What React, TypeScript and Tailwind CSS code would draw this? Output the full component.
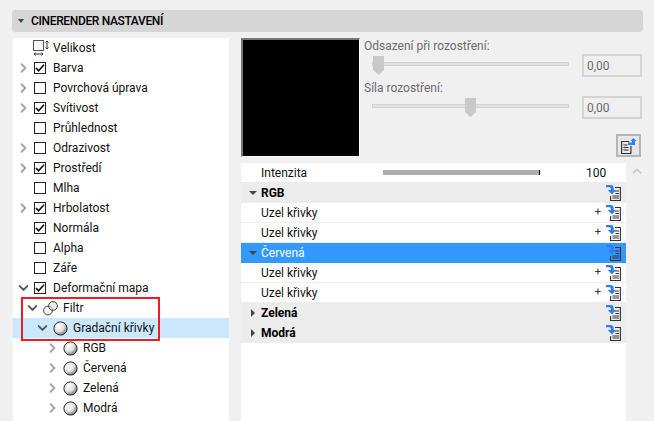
import { ChevronDown, ChevronRight } from 'lucide-react';

type Node = {
  label: string;
  arrow?: 'right' | 'down';
  check?: boolean;
  icon?: 'size' | 'filter' | 'ball';
  indent?: number;
  selected?: boolean;
};

const tree: Node[] = [
  { label: 'Velikost', icon: 'size' },
  { label: 'Barva', arrow: 'right', check: true },
  { label: 'Povrchová úprava', arrow: 'right', check: false },
  { label: 'Svítivost', arrow: 'right', check: true },
  { label: 'Průhlednost', check: false },
  { label: 'Odrazivost', arrow: 'right', check: false },
  { label: 'Prostředí', arrow: 'right', check: true },
  { label: 'Mlha', check: false },
  { label: 'Hrbolatost', arrow: 'right', check: true },
  { label: 'Normála', check: true },
  { label: 'Alpha', check: false },
  { label: 'Záře', check: false },
  { label: 'Deformační mapa', arrow: 'down', check: true },
  { label: 'Filtr', arrow: 'down', icon: 'filter', indent: 9 },
  { label: 'Gradační křivky', arrow: 'down', icon: 'ball', indent: 19, selected: true },
  { label: 'RGB', arrow: 'right', icon: 'ball', indent: 29 },
  { label: 'Červená', arrow: 'right', icon: 'ball', indent: 29 },
  { label: 'Zelená', arrow: 'right', icon: 'ball', indent: 29 },
  { label: 'Modrá', arrow: 'right', icon: 'ball', indent: 29 },
];

type Row = { label: string; kind: 'group' | 'item' | 'active'; open?: boolean };

const rows: Row[] = [
  { label: 'RGB', kind: 'group', open: true },
  { label: 'Uzel křivky', kind: 'item' },
  { label: 'Uzel křivky', kind: 'item' },
  { label: 'Červená', kind: 'active', open: true },
  { label: 'Uzel křivky', kind: 'item' },
  { label: 'Uzel křivky', kind: 'item' },
  { label: 'Zelená', kind: 'group' },
  { label: 'Modrá', kind: 'group' },
];

function SizeIcon() {
  return (
    <svg width="16" height="16" viewBox="0 0 16 16" fill="none" className="shrink-0">
      <rect x="0.5" y="0.5" width="10" height="10" stroke="#555" />
      <path d="M14 1v8M12.5 2.5 14 1l1.5 1.5M12.5 7.5 14 9l1.5-1.5" stroke="#333" />
      <path d="M1 14h9M2.5 12.5 1 14l1.5 1.5M8.5 12.5 10 14l-1.5 1.5" stroke="#333" />
    </svg>
  );
}

function Ball() {
  return (
    <svg width="15" height="15" viewBox="0 0 15 15" className="shrink-0">
      <defs>
        <radialGradient id="ball" cx="0.36" cy="0.32" r="0.78">
          <stop offset="0" stopColor="#ffffff" />
          <stop offset="0.5" stopColor="#e2e2e2" />
          <stop offset="1" stopColor="#5f5f5f" />
        </radialGradient>
      </defs>
      <circle cx="7.5" cy="7.5" r="6.6" fill="url(#ball)" stroke="#2b2b2b" strokeWidth="1" />
    </svg>
  );
}

function FilterIcon() {
  return (
    <svg width="15" height="15" viewBox="0 0 15 15" fill="none" stroke="#444" className="shrink-0">
      <circle cx="5" cy="9.5" r="4.4" fill="#f4f4f4" />
      <circle cx="10" cy="5" r="4.4" fill="#dddddd" fillOpacity="0.6" />
    </svg>
  );
}

function CheckBox({ on }: { on: boolean }) {
  return (
    <span className="w-3 h-3 shrink-0 border border-[#222] bg-white flex items-center justify-center">
      {on && (
        <svg width="10" height="10" viewBox="0 0 10 10" fill="none" stroke="#111" strokeWidth="1.7">
          <path d="M1 5l2.6 2.8L9 1.8" />
        </svg>
      )}
    </span>
  );
}

function Tree() {
  return (
    <div className="w-[216px] h-full bg-white overflow-hidden">
      {tree.map((n) => (
        <div
          key={n.label + (n.indent ?? 0)}
          className={`h-5 flex items-center text-[#111] ${n.selected ? 'bg-[#cce8ff]' : ''}`}
        >
          <span className="flex items-center" style={{ paddingLeft: (n.indent ?? 0) + 6 }}>
            <span className="w-[15px] flex shrink-0 -ml-[3px] mr-[3px]">
              {n.arrow === 'right' && <ChevronRight size={16} strokeWidth={3.2} className="text-[#a6a6a6]" />}
              {n.arrow === 'down' && <ChevronDown size={16} strokeWidth={3.2} className="text-[#555]" />}
            </span>
            {n.check !== undefined && <CheckBox on={n.check} />}
            {n.icon === 'size' && (
              <span className="-ml-[1px]">
                <SizeIcon />
              </span>
            )}
            {n.icon === 'ball' && <Ball />}
            {n.icon === 'filter' && <FilterIcon />}
          </span>
          <span className={n.icon === 'size' ? 'ml-[4px]' : n.check !== undefined ? 'ml-[7px]' : 'ml-[5px]'}>{n.label}</span>
        </div>
      ))}
    </div>
  );
}

function Slider({ label, at }: { label: string; at: string }) {
  return (
    <div className="h-[42px]">
      <div className="h-[16px] leading-[16px] text-[#6e6a70]">{label}</div>
      <div className="flex items-center">
        <div className="relative w-[197px] h-[4px] -mt-[3px] ml-[8px] bg-[#e3e3e3] border border-[#d0d0d0]">
          <svg width="11" height="19" viewBox="0 0 11 19" className={`absolute top-[-7px] ${at}`}>
            <path d="M0 0h11v14l-5.5 5L0 14z" fill="#c9c9c9" />
          </svg>
        </div>
        <div className="ml-[13px] w-[60px] h-[23px] border-2 border-[#d4d4d4] bg-[#efefef] flex items-center pl-[3px] text-[#6e6a70]">
          0,00
        </div>
      </div>
    </div>
  );
}

function DocIcon({ up }: { up?: boolean }) {
  if (up) {
    return (
      <svg width="16" height="16" viewBox="0 0 16 16" fill="none">
        <path d="M8 3.5H.6v12h9.3V8" stroke="#333" strokeWidth="1.2" />
        <path d="M2.5 7h4M2.5 9.5h5M2.5 12h5" stroke="#333" />
        <path d="M7 7V4.5h4V3H9.5l3-3 3 3H14v4z" fill="#2d7ff0" />
      </svg>
    );
  }
  return (
    <svg width="15" height="16" viewBox="0 0 15 16" fill="none" className="shrink-0">
      <path d="M9 2.5h5.4v13H4.6v-4.5" stroke="#333" strokeWidth="1.1" />
      <path d="M9 6h4M9.5 8.5h3.5M6.5 11h6.5M6.5 13h6.5" stroke="#333" />
      <path d="M0 0h4.5C7 0 7.7 1.5 7.7 3.5V5H10L6 9.5 1.8 5h3V3.8C4.8 2.8 4.2 2.3 3 2.3H0z" fill="#2d7ff0" />
    </svg>
  );
}

function TableRow({ row, first }: { row: Row; first: boolean }) {
  if (row.kind === 'item') {
    return (
      <div className="h-5 bg-white border-b border-[#eeeeee] flex items-center pl-[20px] text-[#111]">
        <span className="flex-1">{row.label}</span>
        <span className="text-[#333] mr-[5px] text-[11px]">+</span>
        <span className="mr-[5px]">
          <DocIcon />
        </span>
      </div>
    );
  }
  const active = row.kind === 'active';
  return (
    <div
      className={`flex items-center ${first ? 'h-[21px] pt-[1px]' : 'h-5'} ${active ? 'bg-[#3399ff] text-white' : 'bg-[#ececec] text-black font-bold'}`}
    >
      <span className="w-[20px] flex justify-center">
        {row.open ? (
          <span className="w-0 h-0 border-x-[4px] border-x-transparent border-t-[4px] border-t-[#444] ml-[3px]" />
        ) : (
          <span className="w-0 h-0 border-y-[4px] border-y-transparent border-l-[4px] border-l-[#444] ml-[3px]" />
        )}
      </span>
      <span className="flex-1">{row.label}</span>
      <span className="mr-[5px]">
        <DocIcon />
      </span>
    </div>
  );
}

export default function App() {
  return (
    <div className="relative w-[654px] h-[421px] overflow-hidden bg-[#f0f0f0] text-[12px] font-['Roboto','Open_Sans',sans-serif] pt-[10px]">
      <div className="ml-[12px] mr-[11px] h-[22px] rounded-[3px] bg-[#d6d6d6] flex items-center">
        <span className="w-0 h-0 ml-[6px] border-x-[3.5px] border-x-transparent border-t-[4px] border-t-[#444]" />
        <span className="ml-[7px] font-medium tracking-[-0.35px] text-black">CINERENDER NASTAVENÍ</span>
      </div>

      <div className="flex h-[383px] mt-[6px] ml-[13px]">
        <Tree />

        <div className="ml-[12px] w-[413px]">
          <div className="flex h-[120px]">
            <div className="w-[119px] h-[119px] bg-black border-t-2 border-l-2 border-r border-b border-t-[#777] border-l-[#777] border-r-white border-b-white" />
            <div className="ml-[4px] flex-1">
              <Slider label="Odsazení při rozostření:" at="left-0" />
              <Slider label="Síla rozostření:" at="left-[92px]" />
              <div className="flex justify-end pr-[13px] mt-[12px]">
                <div className="w-[25px] h-[23px] border-2 border-[#b5b5b5] bg-[#e6e6e6] flex items-center justify-center">
                  <DocIcon up />
                </div>
              </div>
            </div>
          </div>

          <div className="mt-[5px] flex">
            <div className="w-[385px] h-[258px] bg-white">
              <div className="h-[19px] flex items-center pl-[20px] text-[#111]">
                <span className="w-[122px]">Intenzita</span>
                <span className="w-[157px] h-[5px] bg-[#adadad] border-r border-black" />
                <span className="ml-[46px]">100</span>
              </div>
              {rows.map((r, i) => (
                <TableRow key={i} row={r} first={i === 0} />
              ))}
            </div>
            <div className="flex-1 pl-[4px] pt-[1px]">
              <ChevronDown size={14} strokeWidth={3} className="rotate-180 text-[#c8c8c8]" />
            </div>
          </div>
        </div>
      </div>

      <div className="absolute left-[21px] top-[297px] w-[139px] h-[44px] border-2 border-[#ee1c25]" />
    </div>
  );
}
